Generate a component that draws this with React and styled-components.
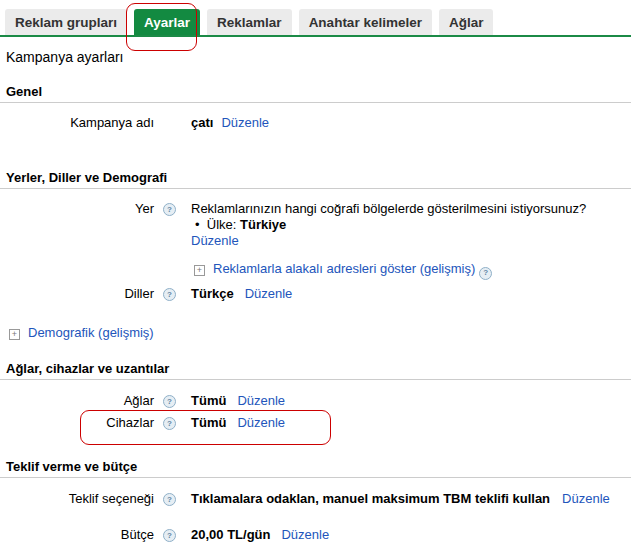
import React from "react";
import styled, { createGlobalStyle } from "styled-components";

const G = createGlobalStyle`
  body { margin:0; font-family:"Liberation Sans", Arial, sans-serif; font-size:13px; color:#000; background:#fff; width:631px; overflow:hidden; }
`;
const Page = styled.div`position:relative; width:631px; height:549px;`;
const Tabs = styled.div`display:flex; gap:7px; padding:9px 0 0 5px; border-bottom:2px solid #1b8a46;`;
const Tab = styled.div`
  height:26px; padding:0 10px; display:flex; align-items:center; font-weight:bold; font-size:13.5px;
  border-radius:3px 3px 0 0;
  background:${p=>p.$on?"#138a41":"#ebebeb"}; color:${p=>p.$on?"#fff":"#333"};
`;
const Title = styled.div`font-size:14px; padding:12px 0 0 6px; height:28px; box-sizing:border-box;`;
const Section = styled.div`
  margin:${p=>p.$mt}px 0 0 0; padding:0 0 1px 6px; font-weight:bold; font-size:13px;
  border-bottom:1px solid #ccc; height:17px; line-height:16px;
`;
const Row = styled.div`display:grid; grid-template-columns:154px 37px 1fr; margin-top:${p=>p.$mt}px; line-height:16px;`;
const Label = styled.div`text-align:right;`;
const HelpCell = styled.div`display:flex; padding:2px 0 0 9px; height:16px; box-sizing:border-box;`;
const Help = styled.span`
  display:inline-flex; width:11px; height:11px; border-radius:50%; border:1px solid #8fb0c8; background:#e6eef4;
  color:#5f87a5; font-size:8px; font-weight:bold; align-items:center; justify-content:center; line-height:1;
  margin-left:${p=>p.$ml||0}px; vertical-align:-2px;
`;
const Link = styled.span`color:#2255bb; margin-left:${p=>p.$ml||0}px;`;
const B = styled.b`font-weight:bold;`;
const Plus = styled.span`
  display:inline-flex; width:9px; height:9px; border:1px solid #999; color:#777; font-size:9px; align-items:center; justify-content:center;
  margin-right:8px; vertical-align:0px; line-height:1;
`;
const Line = styled.div`margin-top:${p=>p.$mt||0}px; height:16px; line-height:16px; padding-left:${p=>p.$pl||0}px;`;
const Mark = styled.div`position:absolute; border:1px solid #c00; border-radius:9px;`;

const H = () => <HelpCell><Help>?</Help></HelpCell>;

export default function App(){
  return <Page><G/>
    <Tabs>
      <Tab>Reklam grupları</Tab>
      <Tab $on>Ayarlar</Tab>
      <Tab>Reklamlar</Tab>
      <Tab>Anahtar kelimeler</Tab>
      <Tab>Ağlar</Tab>
    </Tabs>
    <Title>Kampanya ayarları</Title>
    <Section $mt={19}>Genel</Section>
    <Row $mt={12}><Label>Kampanya adı</Label><div/><div><B>çatı</B><Link $ml={8}>Düzenle</Link></div></Row>
    <Section $mt={39}>Yerler, Diller ve Demografi</Section>
    <Row $mt={12}><Label>Yer</Label><H/><div>
      <Line>Reklamlarınızın hangi coğrafi bölgelerde gösterilmesini istiyorsunuz?</Line>
      <Line $pl={4}>•&nbsp; Ülke: <B>Türkiye</B></Line>
      <Line><Link>Düzenle</Link></Line>
      <Line $mt={12} $pl={3}><Plus>+</Plus><Link>Reklamlarla alakalı adresleri göster (gelişmiş)</Link><Help $ml={4}>?</Help></Line>
    </div></Row>
    <Row $mt={9}><Label>Diller</Label><H/><div><B>Türkçe</B><Link $ml={11}>Düzenle</Link></div></Row>
    <Line $mt={23} $pl={9}><Plus>+</Plus><Link>Demografik (gelişmiş)</Link></Line>
    <Section $mt={20}>Ağlar, cihazlar ve uzantılar</Section>
    <Row $mt={13}><Label>Ağlar</Label><H/><div><B>Tümü</B><Link $ml={11}>Düzenle</Link></div></Row>
    <Row $mt={6}><Label>Cihazlar</Label><H/><div><B>Tümü</B><Link $ml={11}>Düzenle</Link></div></Row>
    <Section $mt={28}>Teklif verme ve bütçe</Section>
    <Row $mt={13}><Label>Teklif seçeneği</Label><H/><div><B>Tıklamalara odaklan, manuel maksimum TBM teklifi kullan</B><Link $ml={12}>Düzenle</Link></div></Row>
    <Row $mt={20}><Label>Bütçe</Label><H/><div><B>20,00 TL/gün</B><Link $ml={11}>Düzenle</Link></div></Row>
    <Mark style={{left:126,top:3,width:69,height:46}}/>
    <Mark style={{left:80,top:410,width:249,height:33}}/>
  </Page>;
}
